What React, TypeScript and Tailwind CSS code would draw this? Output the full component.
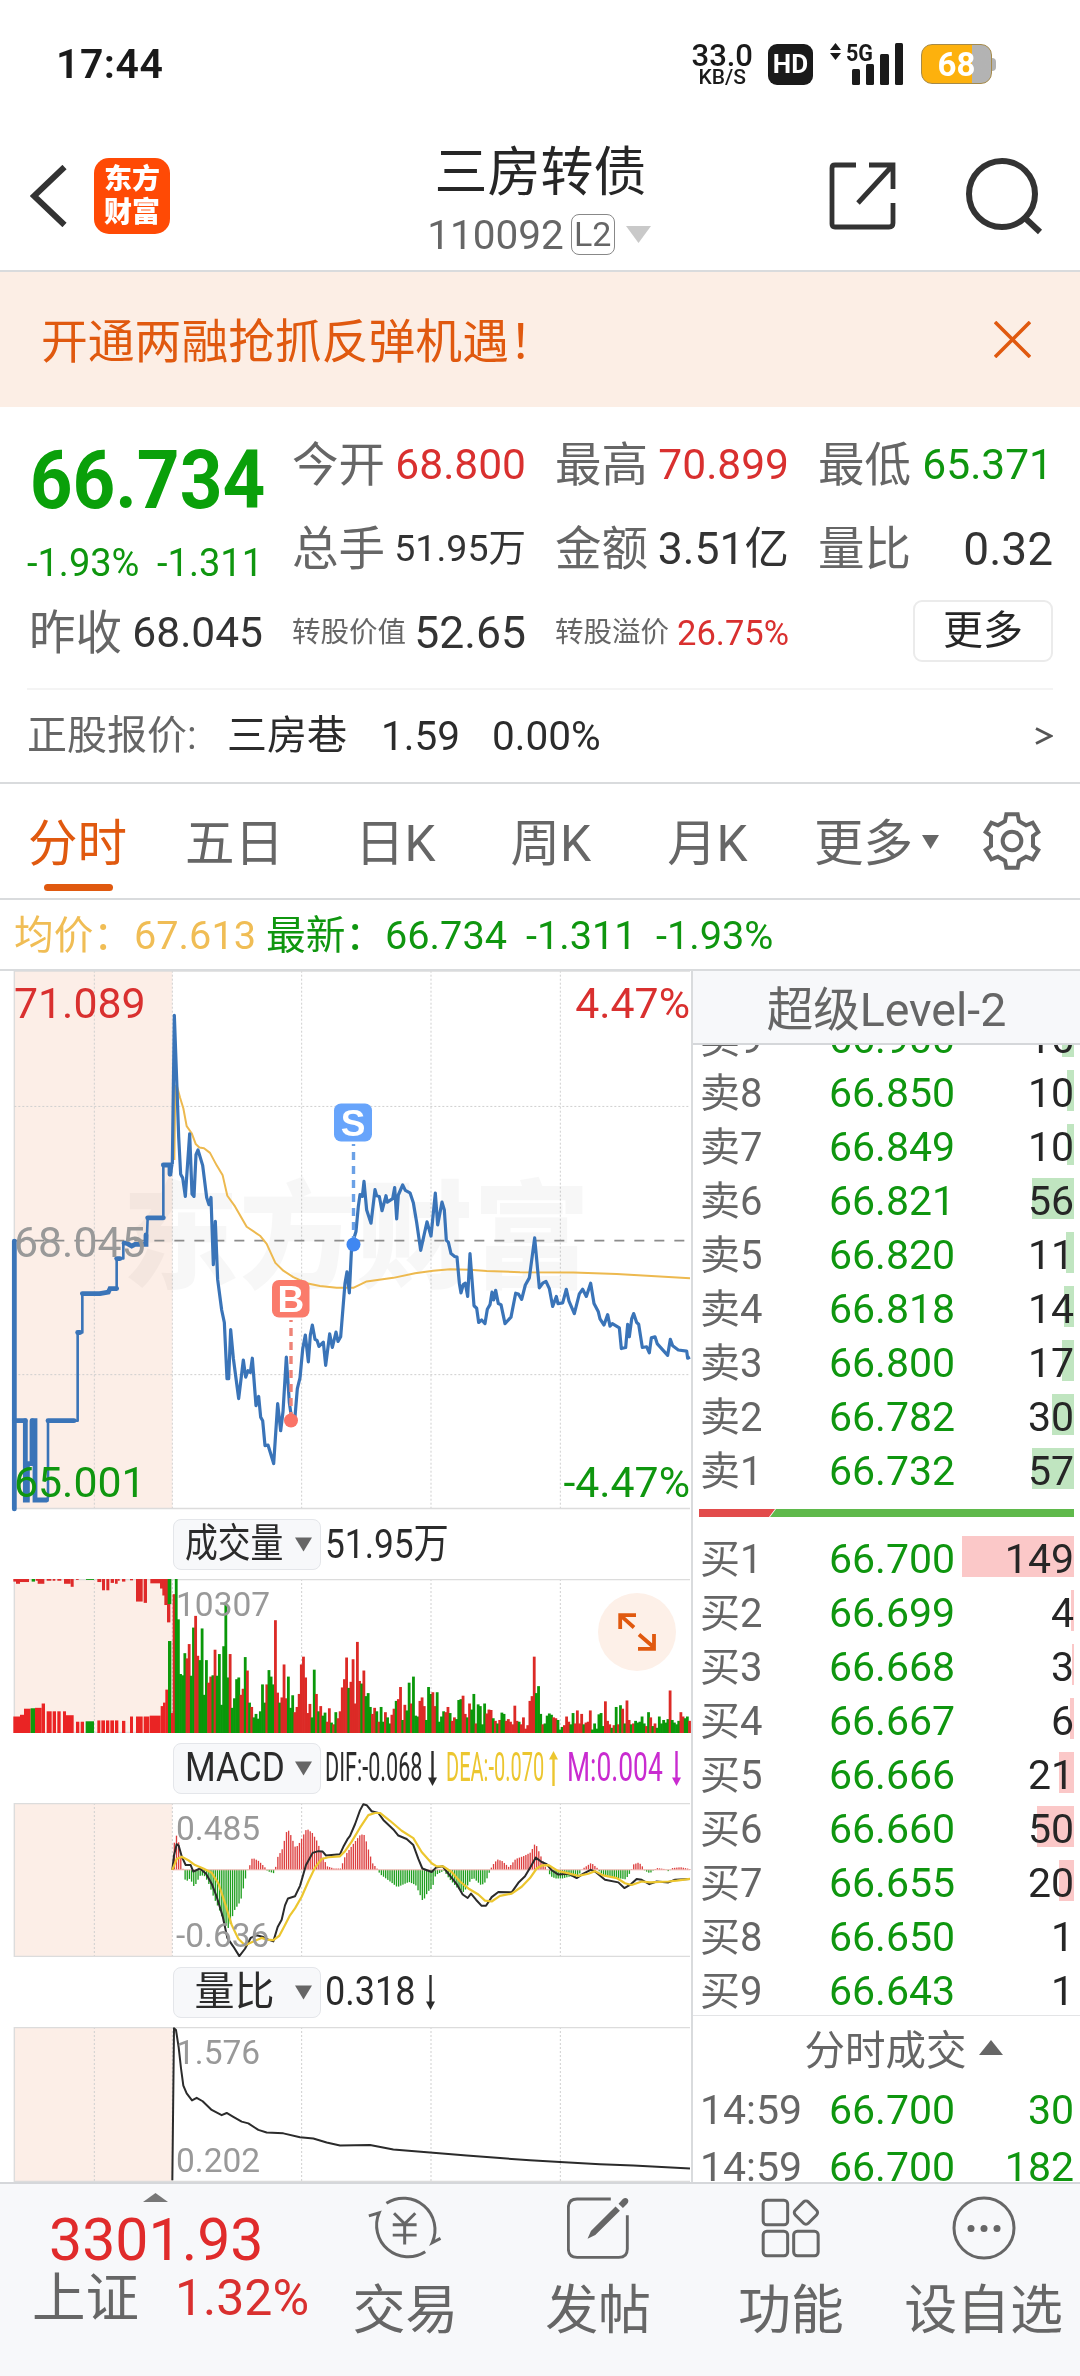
import type { ReactNode } from "react";

type Quote = { name: string; price: string; qty: string; bar: number };

const sells: Quote[] = [
  { name: "卖9", price: "66.900", qty: "16", bar: 12 },
  { name: "卖8", price: "66.850", qty: "10", bar: 7 },
  { name: "卖7", price: "66.849", qty: "10", bar: 7 },
  { name: "卖6", price: "66.821", qty: "56", bar: 42 },
  { name: "卖5", price: "66.820", qty: "11", bar: 8 },
  { name: "卖4", price: "66.818", qty: "14", bar: 10 },
  { name: "卖3", price: "66.800", qty: "17", bar: 12 },
  { name: "卖2", price: "66.782", qty: "30", bar: 22 },
  { name: "卖1", price: "66.732", qty: "57", bar: 42 },
];

const buys: Quote[] = [
  { name: "买1", price: "66.700", qty: "149", bar: 112 },
  { name: "买2", price: "66.699", qty: "4", bar: 3 },
  { name: "买3", price: "66.668", qty: "3", bar: 2 },
  { name: "买4", price: "66.667", qty: "6", bar: 4 },
  { name: "买5", price: "66.666", qty: "21", bar: 15 },
  { name: "买6", price: "66.660", qty: "50", bar: 37 },
  { name: "买7", price: "66.655", qty: "20", bar: 15 },
  { name: "买8", price: "66.650", qty: "1", bar: 0 },
  { name: "买9", price: "66.643", qty: "1", bar: 0 },
];

const trades = [
  { time: "14:59", price: "66.700", qty: "30" },
  { time: "14:59", price: "66.700", qty: "182" },
];

const tabs = [
  { label: "五日", gap: "ml-[58px]" },
  { label: "日K", gap: "ml-[71px]" },
  { label: "周K", gap: "ml-[75px]" },
  { label: "月K", gap: "ml-[76px]" },
];

/* Chart series. All x values share one 0..2076 axis. */

const preLine =
  "43,787 43,1537 43,1290 76,1290 76,1512 84,1512 84,1410 98,1410 98,1290 105,1290 105,1512 140,1512 144,1505 144,1290 233,1290 233,1043 247,1043 247,934 290,934 325,930 328,920 350,920 350,836 370,836 370,793 385,795 395,801 405,796 440,793 443,722 490,720 490,574 510,574 512,600 517,572";

const priceLine =
  "517,572 523,155 530,335 536,495 542,600 548,610 556,662 569,487 576,655 582,662 588,545 594,532 608,575 620,665 627,685 633,665 640,853 646,732 653,895 665,980 673,1015 681,1172 686,1172 692,1035 700,1115 716,1228 730,1120 737,1168 744,1150 751,1155 757,1115 768,1248 776,1222 782,1280 788,1290 795,1360 804,1358 821,1410 833,1242 842,1318 849,1265 859,1112 868,1240 876,1290 884,1290 892,1200 900,1170 908,1090 916,1050 925,1125 931,1050 937,1022 945,1062 951,1065 957,1082 970,1070 977,1135 989,1047 997,1085 1008,1042 1014,1068 1022,1055 1035,905 1041,873 1048,932 1055,800 1068,760 1075,690 1080,657 1087,662 1092,620 1100,700 1113,737 1125,643 1130,660 1138,662 1146,702 1158,660 1162,678 1178,668 1184,637 1190,725 1195,658 1208,630 1216,645 1230,652 1240,680 1250,735 1262,813 1281,733 1293,773 1306,653 1313,742 1326,678 1333,700 1339,785 1345,790 1353,822 1364,830 1371,832 1378,905 1383,932 1390,908 1396,905 1403,942 1410,822 1422,968 1430,975 1436,1015 1445,1008 1455,1018 1462,978 1470,965 1476,930 1481,952 1487,925 1495,962 1503,965 1515,1018 1533,1000 1547,933 1555,935 1565,950 1576,910 1588,890 1604,778 1618,918 1628,905 1638,900 1648,920 1658,970 1669,942 1674,962 1688,960 1699,922 1707,955 1723,990 1738,935 1748,922 1759,942 1772,905 1782,962 1795,985 1800,1005 1812,1022 1823,993 1830,1025 1837,1018 1858,1030 1864,1088 1877,1085 1883,1020 1888,1055 1895,1005 1901,990 1910,1015 1916,1020 1927,1085 1940,1083 1948,1100 1954,1058 1965,1055 1972,1075 2003,1107 2011,1062 2018,1080 2035,1092 2060,1095 2063,1115 2070,1112";

const avgLine =
  "523,560 526,355 530,350 540,385 550,415 560,465 575,485 587,515 598,525 612,527 630,540 650,575 668,603 682,660 705,690 740,747 780,772 800,795 826,848 850,870 880,888 920,905 960,913 1010,918 1060,918 1100,900 1180,890 1245,877 1300,870 1350,866 1410,867 1460,871 1560,874 1720,875 1850,879 1980,886 2070,891";

const difLine =
  "517,853 522,820 530,794 536,797 545,822 557,842 572,842 580,857 600,850 618,862 635,885 650,915 668,960 682,1010 700,1030 718,1052 735,1035 752,1010 770,1004 790,1008 805,1014 820,1018 833,985 845,968 855,935 864,919 885,914 900,890 918,842 938,814 955,810 968,811 978,820 1020,817 1030,800 1042,783 1050,775 1065,748 1080,716 1090,702 1100,704 1115,718 1135,722 1150,738 1180,760 1195,774 1220,782 1240,796 1255,828 1267,850 1295,858 1308,848 1328,845 1345,862 1370,886 1388,910 1403,918 1413,908 1428,922 1445,936 1458,936 1475,916 1495,904 1535,905 1555,883 1575,868 1592,846 1607,825 1625,835 1640,840 1655,854 1675,864 1705,862 1730,872 1750,862 1772,853 1785,857 1815,876 1855,882 1873,895 1890,888 1910,874 1925,876 1948,886 1970,880 2005,882 2025,876 2070,874";

const deaLine =
  "517,853 530,828 545,823 565,831 585,842 610,850 635,860 655,884 675,930 695,980 715,1012 735,1027 760,1018 785,1010 800,1014 820,1015 838,1005 855,980 870,958 885,942 905,915 925,880 945,848 965,828 985,824 1020,822 1035,810 1055,788 1080,756 1105,727 1125,722 1140,722 1170,740 1205,763 1240,780 1265,812 1295,838 1310,845 1330,845 1355,858 1380,880 1405,896 1435,910 1455,924 1475,926 1500,913 1535,908 1565,892 1590,872 1610,850 1625,843 1645,842 1675,856 1700,860 1735,867 1765,862 1785,856 1810,866 1850,872 1875,884 1895,888 1925,880 1950,882 2005,880 2030,878 2070,874";

const ratioLine =
  "517,1568 522,1218 528,1222 536,1262 543,1310 550,1350 560,1368 576,1384 590,1378 608,1386 635,1406 665,1418 680,1413 700,1422 725,1433 745,1437 775,1452 800,1458 850,1460 900,1469 940,1472 980,1481 1020,1488 1110,1487 1180,1497 1290,1504 1400,1511 1500,1517 1590,1522 1680,1526 1800,1531 1900,1534 2070,1541";

// one bar per minute, negative = falling minute
const volumes = [
  320, -355, -262, -136, -133, -184, 172, 205, -132, -243, 270, 178, -168, -241, -88, -168, 116, 130, -133, 192,
  -132, -182, -65, -200, -300, -128, 182, -58, -80, -124, -128, 88, 102, -175, 144, -70, 60, -36, -44, -33,
  -50, -112, -70, 112, -145, -130, -112, 260, 93, -70, 82, 158, 80, -130, -58, -87, 48, 60, 90, 158,
  176, 128, 46, 67, -36, -146, 90, -50, 62, -40, -47, 26, 57, -24, 20, -48, 34, 50, 105, 124,
  174, -104, 118, 170, 68, 210, 120, -114, 144, -85, -92, -60, 44, 58, -50, 26, -60, -26, 48, -36,
  -22, 42, 56, -74, 78, 106, -30, 65, -52, -116, 68, -130, -40, -38, 74, 82, 62, -30, -106, -90,
  94, 62, -94, -26, -38, -50, 48, 60, -46, 28, 36, -32, -76, -78, 86, 44, -36, 68, -54, -90,
  22, -66, -62, -20, -68, 45, 54, 53, -34, 28, -22, 30, -47, -44, 28, 32, 26, 20, 63, 28,
  -26, 20, 36, 10, 18, 74, 85, 176, -92, -108, -44, 20, -22, -40, -45, -42, 36, 34, -30, -8,
  -14, 18, 38, 26, -20, -46, 22, 52, 22, 44, -20, 24, 26, 52, -8, -22, -10, -43, -46, -16,
  73, 28, 20, -12, 18, -60, 20, -64, 56, -22, 75, 30, -20, 22, -28, -24, -26, -38, -22, 16,
  -48, 36, -16, 22, -12, -38, -22, -30, -24, -32, 98, -30, -24, -20, -28, 48, 38, -34, -38, 28,
];

// [x, width, height, rising]
const auctionTop: [number, number, number, number][] = [
  [40, 8, 6, 1], [48, 12, 11, 1], [60, 27, 7, 1], [95, 10, 6, 0], [107, 8, 4, 1], [113, 20, 11, 1], [140, 14, 4, 1],
  [158, 8, 4, 1], [172, 12, 4, 1], [192, 20, 11, 1], [212, 9, 18, 1], [228, 8, 2, 1], [258, 24, 2, 0], [292, 12, 7, 1],
  [306, 9, 26, 1], [319, 9, 26, 1], [332, 10, 9, 1], [345, 8, 11, 1], [353, 6, 4, 1], [366, 10, 6, 1], [390, 9, 3, 1],
  [408, 20, 52, 1], [431, 10, 55, 1], [451, 34, 10, 1], [480, 10, 22, 1], [487, 9, 38, 1], [493, 8, 60, 1],
  [501, 10, 100, 1], [503, 11, 58, 0],
];

const auctionBottom: [number, number, number, number][] = [
  [40, 20, 38, 1], [60, 14, 42, 1], [72, 20, 56, 1], [92, 13, 57, 0], [105, 20, 58, 1], [125, 10, 68, 1],
  [140, 15, 50, 1], [158, 10, 50, 1], [172, 10, 50, 1], [189, 9, 50, 1], [198, 23, 41, 1], [228, 10, 26, 1],
  [242, 10, 26, 1], [257, 25, 27, 0], [292, 9, 29, 1], [304, 11, 29, 1], [318, 10, 29, 1], [331, 11, 29, 1],
  [345, 10, 29, 1], [366, 10, 28, 1], [390, 9, 38, 1], [408, 20, 38, 1], [431, 17, 38, 1], [449, 33, 40, 1],
  [482, 8, 62, 1], [489, 8, 70, 1], [496, 9, 100, 1], [504, 10, 212, 0], [513, 8, 46, 1],
];

const macdShape = [
  [520, 60], [530, 85], [540, 30], [546, 8], [548, -5], [555, -28], [568, -20], [581, -40], [594, -20], [600, -12],
  [613, -15], [626, -35], [640, -65], [655, -90], [672, -125], [685, -136], [700, -95], [720, -72], [733, -25],
  [740, -2], [745, 5], [755, 28], [775, 20], [790, 8], [797, 2], [800, -3], [820, -8], [824, 0], [828, 25],
  [845, 48], [860, 95], [868, 85], [885, 50], [895, 60], [918, 95], [935, 85], [950, 65], [965, 32], [980, 8],
  [1000, 3], [1020, 3], [1035, 35], [1060, 62], [1080, 82], [1092, 80], [1102, 50], [1116, 15], [1130, 2],
  [1138, -10], [1170, -28], [1190, -40], [1225, -28], [1245, -35], [1267, -73], [1282, -50], [1295, -42],
  [1305, -12], [1330, -2], [1345, -20], [1370, -42], [1390, -52], [1405, -30], [1417, -18], [1442, -36],
  [1455, -28], [1468, -2], [1475, 10], [1490, 24], [1505, 20], [1525, 6], [1545, 25], [1570, 32], [1590, 40],
  [1604, 62], [1617, 38], [1635, 5], [1640, 0], [1650, -15], [1665, -20], [1685, -20], [1710, -15], [1725, -18],
  [1738, -8], [1745, 2], [1772, 16], [1790, 4], [1796, -4], [1810, -15], [1835, -17], [1875, -22], [1890, -5],
  [1897, 12], [1915, 17], [1925, 8], [1932, -2], [1948, -8], [1960, 0], [1970, 4], [1990, 2], [2005, -4],
  [2015, 4], [2040, 6], [2060, 3], [2070, 1],
];

function macdAt(x: number) {
  for (let i = 1; i < macdShape.length; i++) {
    const [x1, y1] = macdShape[i];
    if (x <= x1) {
      const [x0, y0] = macdShape[i - 1];
      return y0 + ((y1 - y0) * (x - x0)) / (x1 - x0);
    }
  }
  return 0;
}

function Line({ points, color, width = 1.4 }: { points: string; color: string; width?: number }) {
  return (
    <polyline
      points={points}
      fill="none"
      stroke={color}
      strokeWidth={width}
      strokeLinejoin="round"
      vectorEffect="non-scaling-stroke"
    />
  );
}

// pink pre-market area, frame and vertical grid of one chart
function Frame({ top, bottom }: { top: number; bottom: number }) {
  return (
    <>
      <rect x={43} y={top} width={474} height={bottom - top} fill="#fceee7" />
      {[283, 517, 905, 1293, 1681].map((x) => (
        <line
          key={x}
          x1={x}
          x2={x}
          y1={top}
          y2={bottom}
          stroke="#cfcfcf"
          strokeWidth={1}
          strokeDasharray="2 2"
          vectorEffect="non-scaling-stroke"
        />
      ))}
      <path
        d={`M2070 ${top + 1}H43V${bottom - 1}H2070`}
        fill="none"
        stroke="#dcdcdc"
        strokeWidth={1.4}
        vectorEffect="non-scaling-stroke"
      />
    </>
  );
}

function PriceChart() {
  return (
    <div className="relative h-[538px]">
      <div className="absolute top-[183px] left-[122px] text-[117px] leading-[170px] font-black text-black/[0.03]">
        东方财富
      </div>
      <svg className="absolute inset-0 h-[542px] w-[692px]" viewBox="0 30.8 2076 1517.6" preserveAspectRatio="none">
        <g className="mix-blend-multiply">
          <Frame top={30} bottom={1537} />
        </g>
        {[410, 1161].map((y) => (
          <line
            key={y}
            x1={43}
            x2={2070}
            y1={y}
            y2={y}
            stroke="#cfcfcf"
            strokeDasharray="2 2"
            vectorEffect="non-scaling-stroke"
          />
        ))}
        <line
          x1={43}
          x2={2070}
          y1={786}
          y2={786}
          stroke="#8c8c8c"
          strokeWidth={1.8}
          strokeDasharray="10 10"
          vectorEffect="non-scaling-stroke"
        />
        <Line points={avgLine} color="#edb94f" width={2} />
        <Line points={preLine} color="#3a74b8" width={2.6} />
        <g stroke="#3a74b8" strokeWidth={4.8} strokeLinecap="round" fill="none">
          {[
            "M43 787V1537",
            "M43 1290H76",
            "M98 1290H105V1512H140",
            "M76 1290V1512H82V1410H96V1290",
            "M144 1290H222",
            "M233 1043H240",
            "M247 934H285L300 934 325 930 330 920H350",
            "M350 836H360",
            "M372 793H380L395 801 405 796H438V770",
            "M443 722H490",
            "M490 574H510V600",
          ].map((d) => (
            <path key={d} d={d} vectorEffect="non-scaling-stroke" />
          ))}
        </g>
        <Line points={priceLine} color="#3a74b8" width={3.2} />
      </svg>
      <svg className="absolute inset-0 h-[538px] w-[692px]" viewBox="0 971 692 538">
        <path d="M291 1320V1417" stroke="#ee8377" strokeWidth="3.4" strokeDasharray="8 6" strokeDashoffset="6" />
        <circle cx="291" cy="1420.5" r="7" fill="#fa7367" />
        <rect x="272" y="1280" width="37.5" height="37.5" rx="7" fill="#fa7b6b" />
        <path d="M353.5 1144V1240" stroke="#6ba1e6" strokeWidth="3.4" strokeDasharray="8 6" strokeDashoffset="6" />
        <circle cx="353.5" cy="1244.5" r="7" fill="#3f87f2" />
        <rect x="334" y="1103.5" width="38" height="38" rx="7" fill="#67a4fb" />
        <g fill="#fff" fontFamily="Liberation Sans" fontWeight="700" fontSize="37" textAnchor="middle">
          <text x="290.8" y="1312">B</text>
          <text x="353" y="1136">S</text>
        </g>
      </svg>
      <Label className="top-[8px] left-[14px] text-[#d9302f]">71.089</Label>
      <Label className="top-[247px] left-[14px] text-[#999]">68.045</Label>
      <Label className="top-[487px] left-[14px] text-[#0f960f]">65.001</Label>
      <Label className="top-[8px] right-[1px] text-[#d9302f]">4.47%</Label>
      <Label className="top-[487px] right-[1px] text-[#0f960f]">-4.47%</Label>
    </div>
  );
}

function Label({ className, children }: { className: string; children: ReactNode }) {
  return <span className={`absolute text-[42.8px] leading-[48px] ${className}`}>{children}</span>;
}

function Axis({ top, bottom }: { top: string; bottom?: string }) {
  return (
    <div className="absolute inset-0 flex flex-col justify-between pt-[9px] pb-[4px] pl-[176px] text-[33.5px] leading-[34px] text-[#999]">
      <span>{top}</span>
      {bottom ? <span>{bottom}</span> : null}
    </div>
  );
}

function VolumeChart() {
  return (
    <div className="relative h-[154px]">
      <svg className="absolute inset-0 h-[154px] w-[692px]" viewBox="0 182 2076 355" preserveAspectRatio="none">
        <Frame top={182} bottom={537} />
        {auctionTop.map(([x, w, h, up]) => (
          <rect key={x} x={x} y={182} width={w} height={h} fill={up ? "#df2a2a" : "#0c9a0c"} />
        ))}
        {auctionBottom.map(([x, w, h, up]) => (
          <rect key={x} x={x} y={537 - h} width={w} height={h} fill={up ? "#ea2424" : "#0c9a0c"} />
        ))}
        {volumes.map((v, i) => (
          <rect
            key={i}
            x={518 + i * 6.47}
            y={537 - Math.abs(v)}
            width={8.4}
            height={Math.abs(v)}
            fill={v > 0 ? "#dc2a26" : "#0a980a"}
          />
        ))}
      </svg>
      <Axis top="10307" />
      <button className="absolute top-[14px] left-[598px] grid size-[78px] place-items-center rounded-full bg-[#fdf0e8]">
        <svg width="40" height="40" viewBox="0 0 40 40" fill="none" stroke="#e0590f" strokeWidth="3.8">
          <path d="M19 3.2H3.2V17M3.2 3.2 17 15.5M22 22.5 37 35.5M37 22V36.8H21" />
        </svg>
      </button>
    </div>
  );
}

function MacdChart() {
  return (
    <div className="relative h-[154px]">
      <svg className="absolute inset-0 h-[154px] w-[692px]" viewBox="0 699 2076 355" preserveAspectRatio="none">
        <Frame top={699} bottom={1054} />
        {Array.from({ length: 240 }, (_, i) => {
          const x = 521 + i * 6.47;
          const v = macdAt(x);
          return (
            <rect
              key={i}
              x={x}
              y={v > 0 ? 853 - v : 853}
              width={4}
              height={Math.abs(v)}
              fill={v > 0 ? "#dd3f3f" : "#1f9f1f"}
            />
          );
        })}
        <line x1={517} x2={2070} y1={853} y2={853} stroke="#f0b5b0" strokeWidth={1} vectorEffect="non-scaling-stroke" />
        <Line points={difLine} color="#2b2b2b" width={2} />
        <Line points={deaLine} color="#ecc62f" width={2.2} />
      </svg>
      <Axis top="0.485" bottom="-0.636" />
    </div>
  );
}

function RatioChart() {
  return (
    <div className="relative h-[155px]">
      <svg className="absolute inset-0 h-[155px] w-[692px]" viewBox="0 1215 2076 357" preserveAspectRatio="none">
        <Frame top={1215} bottom={1572} />
        <Line points={ratioLine} color="#2b2b2b" width={2} />
      </svg>
      <Axis top="1.576" bottom="0.202" />
    </div>
  );
}

function Arrow({ up }: { up?: boolean }) {
  return (
    <svg className={up ? "h-[35px] w-[9px] rotate-180" : "h-[35px] w-[9px]"} viewBox="0 0 9 35">
      <path d="M4.5 0V28" stroke="currentColor" strokeWidth="2.4" />
      <path d="M0 26.500H9L4.500 35Z" fill="currentColor" />
    </svg>
  );
}

function IndicatorRow({ name, children }: { name: ReactNode; children: ReactNode }) {
  return (
    <div className="flex h-[70px] items-center pl-[173px] text-[40px] text-[#2b2b2b]">
      <button className="mr-[4px] flex h-[51px] w-[148px] shrink-0 items-center rounded-lg border border-[#e4e6ea] bg-[#f7f8fa]">
        <span className="flex w-[121px] justify-center">{name}</span>
        <svg className="h-[15px] w-[17px]" viewBox="0 0 17 15">
          <path d="M0 .5H17L8.500 14.500Z" fill="#666" />
        </svg>
      </button>
      {children}
    </div>
  );
}

function QuoteRow({ q, barClass }: { q: Quote; barClass: string }) {
  return (
    <div className="relative flex h-[54px] items-center pt-[1px] pr-[6px] pl-[7px]">
      <div className={`absolute top-[4px] right-[6px] h-[41px] ${barClass}`} style={{ width: q.bar }} />
      <span className="relative w-[129px] text-[40px] text-[#666]">{q.name}</span>
      <span className="relative text-[41px] text-[#0f960f]">{q.price}</span>
      <span className="relative ml-auto text-[41px] text-[#262626]">{q.qty}</span>
    </div>
  );
}

function OrderBook() {
  return (
    <aside className="flex w-[389px] flex-col overflow-hidden border-l-2 border-[#d9dbdd] leading-none">
      <div className="h-[74px] shrink-0 border-b-2 border-[#d5d7da] bg-[#f7f8fa] text-center text-[46.5px] leading-[78px] text-[#666]">
        超级Level-2
      </div>
      <div className="h-[453px] shrink-0 overflow-hidden">
        <div className="-mt-[33px]">
          {sells.map((q) => (
            <QuoteRow key={q.name} q={q} barClass="bg-[#c0e5c0]" />
          ))}
        </div>
      </div>
      <svg className="mt-[11px] ml-[6px] h-[8px] w-[375px] shrink-0" viewBox="0 0 375 8">
        <path d="M0 0H76L70 8H0Z" fill="#e24b4b" />
        <path d="M77 0H375V8H71Z" fill="#5fb94b" />
      </svg>
      <div className="mt-[15px] h-[484px] shrink-0 border-b border-[#e3e4e6]">
        {buys.map((q) => (
          <QuoteRow key={q.name} q={q} barClass="bg-[#fbc8c8]" />
        ))}
      </div>
      <div className="flex h-[66px] shrink-0 items-center justify-center gap-[12px] pt-[4px] pl-[34px] text-[40.5px] text-[#666]">
        分时成交
        <svg className="mb-[8px] h-[15px] w-[24px]" viewBox="0 0 24 15">
          <path d="M12 0 24 15H0Z" fill="#666" />
        </svg>
      </div>
      {trades.map((t) => (
        <div key={t.qty} className="flex h-[56.500px] shrink-0 items-center pt-[1px] pr-[6px] pl-[7px] text-[41px]">
          <span className="w-[129px] text-[#666]">{t.time}</span>
          <span className="text-[#0f960f]">{t.price}</span>
          <span className="ml-auto text-[#0f960f]">{t.qty}</span>
        </div>
      ))}
    </aside>
  );
}

function StatusBar() {
  return (
    <div className="flex h-[128px] shrink-0 items-center pr-[84px] pl-[56px] leading-none text-[#1a1a1a]">
      <span className="text-[41px] font-semibold tracking-[0.5px]">17:44</span>
      <div className="ml-auto flex flex-col items-center font-medium">
        <span className="text-[31px] leading-[27px]">33.0</span>
        <span className="text-[21px] leading-[17px]">KB/S</span>
      </div>
      <div className="ml-[15px] grid h-[41px] w-[45px] place-items-center rounded-[9px] bg-[#1a1a1a] text-[26px] font-bold text-white">
        HD
      </div>
      <svg className="ml-[16px] h-[42px] w-[75px] overflow-visible" viewBox="0 0 75 42" fill="#1a1a1a">
        <path d="M1 7 6.500 0 12 7ZM1 10 6.500 17 12 10Z" />
        <text x="17" y="17.5" fontSize="24" fontWeight="700" fontFamily="Roboto" textLength="27" lengthAdjust="spacingAndGlyphs">
          5G
        </text>
        <rect x="23" y="26" width="8" height="16" rx="1.500" />
        <rect x="37" y="21" width="8" height="21" rx="1.500" />
        <rect x="51" y="11" width="9" height="31" rx="1.500" />
        <rect x="66" y="0" width="8" height="42" rx="1.500" />
      </svg>
      <div className="ml-[17px] flex items-center">
        <div className="grid h-[40px] w-[71px] place-items-center rounded-[11px] border border-[#a58a4a] bg-linear-to-r from-[#fdb10d] from-72% to-[#b3b3b3] to-72% text-[33px] font-bold text-white">
          68
        </div>
        <div className="h-[13px] w-[4px] rounded-r-full bg-[#b3b3b3]" />
      </div>
    </div>
  );
}

function Header() {
  return (
    <header className="flex h-[144px] shrink-0 items-center border-b-2 border-[#d9dbdd] pl-[30px]">
      <svg className="-mt-[6px] h-[62px] w-[38px]" viewBox="0 0 38 62" fill="none" stroke="#333" strokeWidth="6">
        <path d="M34.500 2 4 31 34.500 60" />
      </svg>
      <div className="-mt-[6px] ml-[26px] flex size-[76px] flex-col items-center justify-center rounded-[15px] bg-[#ff4a05] text-[28px] leading-[33px] font-black text-white">
        <span>东方</span>
        <span>财富</span>
      </div>
      <div className="mt-[8px] ml-[234px] flex w-[270px] flex-col items-center leading-none">
        <div className="pl-[3px] text-[53px] leading-[62px] text-[#262626]">三房转债</div>
        <div className="flex h-[60px] items-center text-[40.500px] text-[#666]">
          <span className="relative top-[1px]">110092</span>
          <span className="ml-[7px] grid h-[41px] w-[44px] place-items-center rounded-[8px] border-[1.500px] border-[#888] text-[34px]">
            L2
          </span>
          <svg className="ml-[11px] h-[17px] w-[25px]" viewBox="0 0 25 17">
            <path d="M0 0H25L12.500 17Z" fill="#c9c9c9" />
          </svg>
        </div>
      </div>
      <svg className="-mt-[6px] ml-[154px] h-[70px] w-[70px]" viewBox="0 0 70 70" fill="none" stroke="#333" strokeWidth="4.800">
        <path d="M28 4H7Q4 4 4 7V63Q4 66 7 66H61Q65 66 65 62V42M41 4H65V28M65 4 30 42" />
      </svg>
      <svg className="-mt-[4px] ml-[67px] h-[78px] w-[80px]" viewBox="0 0 80 78" fill="none" stroke="#333" strokeWidth="6">
        <circle cx="37" cy="36" r="33" />
        <path d="M60 60 75 74" />
      </svg>
    </header>
  );
}

function Stat({ label, labelClass, value, valueClass }: { label: string; labelClass?: string; value: string; valueClass: string }) {
  return (
    <div className="flex items-center justify-between whitespace-nowrap">
      <span className={`text-[#666] ${labelClass ?? "text-[46.5px]"}`}>{label}</span>
      <span className={valueClass}>{value}</span>
    </div>
  );
}

function Stats() {
  return (
    <section className="grid h-[281px] shrink-0 grid-cols-[237px_234px_234px_235px] grid-rows-[84px_84px_84px] gap-x-[29px] pt-[16px] pl-[26px] leading-none">
      <div className="row-span-2 flex flex-col justify-between pt-[15px] pb-[7px] text-[#0aa00a]">
        <div className="origin-left scale-x-[.915] pl-[4px] text-[81.500px] leading-[84px] font-bold">66.734</div>
        <div className="flex justify-between pl-[1px] text-[38px] leading-[42px] text-[#0f960f]">
          <span>-1.93%</span>
          <span>-1.311</span>
        </div>
      </div>
      <Stat label="今开" value="68.800" valueClass="text-[42.500px] text-[#d9302f]" />
      <Stat label="最高" value="70.899" valueClass="text-[42.500px] text-[#d9302f]" />
      <Stat label="最低" value="65.371" valueClass="text-[42.500px] text-[#0f960f]" />
      <Stat label="总手" value="51.95万" valueClass="text-[37.500px] text-[#333]" />
      <Stat label="金额" value="3.51亿" valueClass="text-[44.500px] text-[#333]" />
      <Stat label="量比" value="0.32" valueClass="text-[46px] text-[#333]" />
      <div className="pl-[3px] [&>div]:h-full">
        <Stat label="昨收" value="68.045" valueClass="text-[42.500px] text-[#333]" />
      </div>
      <Stat label="转股价值" labelClass="text-[28.500px]" value="52.65" valueClass="text-[44.500px] text-[#333]" />
      <Stat label="转股溢价" labelClass="text-[28.500px]" value="26.75%" valueClass="text-[34.500px] text-[#d9302f]" />
      <button className="mt-[9px] ml-auto h-[62px] w-[140px] rounded-[9px] border-2 border-[#ebebeb] text-[40px] text-[#262626]">
        更多
      </button>
    </section>
  );
}

function GearIcon() {
  return (
    <svg className="h-[60px] w-[60px]" viewBox="243 63 180 180" fill="none" stroke="#666" strokeWidth="12">
      <path d="M316 73H350L354 94 375 106 395 98 412 126 396 138V168L412 180 395 208 375 200 354 212 350 233H316L312 212 291 200 271 208 254 180 270 168V138L254 126 271 98 291 106 312 94Z" />
      <circle cx="333" cy="153" r="28" />
    </svg>
  );
}

function Tabs() {
  return (
    <nav className="flex h-[116px] shrink-0 items-center border-b-2 border-[#d9dbdd] pt-[7px] pl-[28px] text-[49.500px] leading-none text-[#666]">
      <div className="relative text-[#e0590f]">
        分时
        <div className="absolute -bottom-[22px] left-[16px] h-[7px] w-[69px] rounded-full bg-[#e0590f]" />
      </div>
      <div className="flex w-[622px]">
        {tabs.map((t) => (
          <span key={t.label} className={t.gap}>
            {t.label}
          </span>
        ))}
      </div>
      <span className="ml-[65px]">更多</span>
      <svg className="mr-[43px] mb-[6px] ml-[9px] h-[14px] w-[17px]" viewBox="0 0 17 14">
        <path d="M0 0H17L8.500 14Z" fill="#666" />
      </svg>
      <div className="mb-[7px]">
        <GearIcon />
      </div>
    </nav>
  );
}

function TradeIcon() {
  return (
    <svg className="h-[67px] w-[74px]" viewBox="88 40 222 202" fill="none" stroke="#666" strokeWidth="9">
      <path d="M143 68A95 95 0 0 1 281 187L306 174M260 214A95 95 0 0 1 121 97L90 106" />
      <path d="M166 98 198 130 230 98M162 133H234M162 164H234M198 130V192" />
    </svg>
  );
}

function PostIcon() {
  return (
    <svg className="h-[62px] w-[62px]" viewBox="684 50 184 184" fill="none" stroke="#666" strokeWidth="8.500">
      <path d="M814 56H714Q688 56 688 82V204Q688 229 714 229H838Q863 229 863 204V104" />
      <path d="M828 78 841 91 768 163 745 174 755 151ZM837 70 849 57Q857 50 864 56 869 63 862 71L850 83Z" fill="#666" stroke="none" />
    </svg>
  );
}

function FunctionIcon() {
  return (
    <svg className="h-[61px] w-[60px]" viewBox="1264 50 178 182" fill="none" stroke="#666" strokeWidth="9">
      <rect x="1270" y="60" width="73" height="73" rx="11" />
      <rect x="1270" y="152" width="73" height="73" rx="11" />
      <rect x="1361" y="152" width="73" height="73" rx="11" />
      <rect x="1370" y="69" width="55" height="55" rx="10" transform="rotate(45 1397.5 96.5)" />
    </svg>
  );
}

function MoreIcon() {
  return (
    <svg className="h-[64px] w-[64px]" viewBox="0 0 64 64" fill="none" stroke="#666" strokeWidth="3">
      <circle cx="32" cy="32" r="30" />
      <g fill="#666" stroke="none">
        <circle cx="19" cy="32.500" r="3.500" />
        <circle cx="32" cy="32.500" r="3.500" />
        <circle cx="45" cy="32.500" r="3.500" />
      </g>
    </svg>
  );
}

const actions = [
  { label: "交易", icon: <TradeIcon /> },
  { label: "发帖", icon: <PostIcon /> },
  { label: "功能", icon: <FunctionIcon /> },
  { label: "设自选", icon: <MoreIcon /> },
];

function BottomBar() {
  return (
    <footer className="flex h-[194px] shrink-0 border-t-2 border-[#d5d7da] bg-[#f7f8fa] leading-none">
      <div className="flex w-[309px] flex-col">
        <svg className="mt-[9px] ml-[143px] h-[9px] w-[25px]" viewBox="0 0 25 9">
          <path d="M12.500 0 25 9H0Z" fill="#777" />
        </svg>
        <div className="mt-[10px] ml-[49px] text-[59px] leading-[56px] text-[#e02b2b]">3301.93</div>
        <div className="mt-[4px] flex items-center justify-between pl-[32px] text-[53.500px] text-[#666]">
          上证
          <span className="relative -top-[1px] text-[50px] text-[#d9302f]">1.32%</span>
        </div>
      </div>
      {actions.map((a) => (
        <div key={a.label} className="flex flex-1 flex-col items-center">
          <div className="grid h-[87px] place-items-center">{a.icon}</div>
          <span className="mt-[14px] text-[53px] whitespace-nowrap text-[#666]">{a.label}</span>
        </div>
      ))}
    </footer>
  );
}

export default function App() {
  return (
    <div className="flex h-[2376px] w-[1080px] flex-col overflow-hidden bg-white font-['Roboto','Noto_Sans_CJK_SC',sans-serif]">
      <StatusBar />
      <Header />
      <div className="flex h-[135px] shrink-0 items-center justify-between bg-[#fceee5] pr-[49px] pl-[41px] text-[46.800px] text-[#e0590f]">
        <span className="mt-[5px]">开通两融抢抓反弹机遇！</span>
        <svg className="h-[37px] w-[37px]" viewBox="0 0 37 37" stroke="#e0590f" strokeWidth="3.600">
          <path d="M1 1 36 36M36 1 1 36" />
        </svg>
      </div>
      <Stats />
      <div className="mx-[27px] flex h-[94px] shrink-0 items-center border-t-2 border-[#f4f4f4] text-[40.500px] text-[#2b2b2b]">
        <span className="w-[200px] text-[40px] text-[#666]">正股报价:</span>
        <span className="w-[154px] text-[40px]">三房巷</span>
        <span className="w-[111px]">1.59</span>
        <span>0.00%</span>
        <svg className="ml-auto h-[18px] w-[18px]" viewBox="0 0 18 18" fill="none" stroke="#555" strokeWidth="2.800">
          <path d="M1 1.500 16 9 1 16.500" />
        </svg>
      </div>
      <div className="h-[2px] shrink-0 bg-[#d9dbdd]" />
      <Tabs />
      <div className="flex h-[71px] shrink-0 items-center border-b-2 border-[#d9dbdd] pt-[2px] text-[39.700px] whitespace-nowrap text-[#0f960f]">
        <span className="w-[119px] pl-[14px] text-[#f0bd55]">均价：</span>
        <span className="w-[147px] pl-[15px] text-[#f0bd55]">67.613</span>
        <span className="w-[119px]">最新：</span>
        <span className="w-[141px]">66.734</span>
        <span className="w-[130px]">-1.311</span>
        <span>-1.93%</span>
      </div>
      <main className="flex h-[1211px] shrink-0 overflow-hidden">
        <div className="w-[691px] leading-none">
          <PriceChart />
          <IndicatorRow name={<span className="w-[99px] origin-left scale-x-[.82] text-[40px] whitespace-nowrap">成交量</span>}>
            <span className="origin-left scale-x-[.86] text-[41px] whitespace-nowrap">51.95万</span>
          </IndicatorRow>
          <VolumeChart />
          <IndicatorRow name={<span className="w-[99px] origin-left scale-x-[.88]">MACD</span>}>
            <span className="w-[103px] origin-left scale-x-[.54] whitespace-nowrap">DIF:-0.068</span>
            <Arrow />
            <span className="ml-[9px] w-[103px] origin-left scale-x-[.5] whitespace-nowrap text-[#ecc62f]">DEA:-0.070</span>
            <span className="text-[#ecc62f]">
              <Arrow up />
            </span>
            <span className="ml-[9px] w-[105px] origin-left scale-x-[.66] whitespace-nowrap text-[#c92bd0]">M:0.004</span>
            <span className="text-[#c92bd0]">
              <Arrow />
            </span>
          </IndicatorRow>
          <MacdChart />
          <IndicatorRow name={<span>量比</span>}>
            <span className="w-[101px] origin-left scale-x-[.9]">0.318</span>
            <Arrow />
          </IndicatorRow>
          <RatioChart />
        </div>
        <OrderBook />
      </main>
      <BottomBar />
    </div>
  );
}
